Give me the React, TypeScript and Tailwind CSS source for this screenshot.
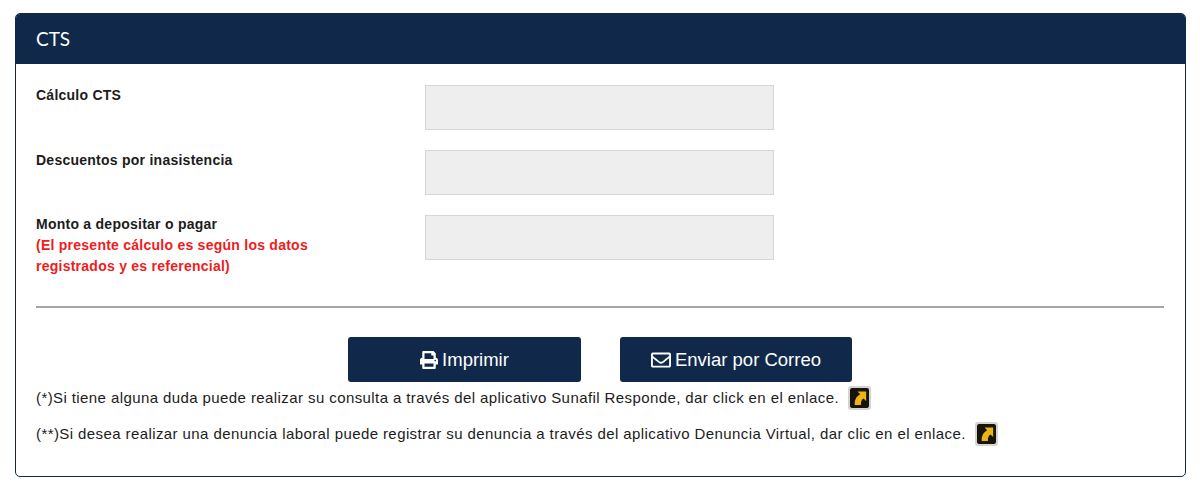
import { FaPrint, FaRegEnvelope } from "react-icons/fa";

function LinkIcon() {
  return (
    <span className="inline-block h-[24px] w-[23px] rounded-[3px] border-2 border-[#d4d4d4] bg-white">
      <svg viewBox="0 0 20 20" preserveAspectRatio="none" className="h-full w-full">
        <rect width="20" height="20" rx="2" fill="#17140c" />
        <path d="M8 3.5h9v9.5l-2.8-2.6C12 11.5 11.5 13.5 11.5 17H5C4.6 12 6.5 8.5 10.7 6.2z" fill="#eeb416" />
      </svg>
    </span>
  );
}

function Row({ children, last }: { children: React.ReactNode; last?: boolean }) {
  return (
    <div className={last ? "flex items-start" : "flex items-start mb-[20px]"}>
      <div className={last ? "-mt-[1px] w-[389px] text-[14px] font-bold leading-[21px] tracking-[0.25px] text-[#1c1c1c]" : "w-[389px] text-[14px] font-bold leading-[21px] tracking-[0.25px] text-[#1c1c1c]"}>{children}</div>
      <div className="h-[45px] w-[349px] border border-[#d6d6d6] bg-[#eeeeee]" />
    </div>
  );
}

export default function App() {
  return (
    <div className="h-[501px] bg-white pt-[13px] pl-[15px] font-['Liberation_Sans',Arial,sans-serif]">
      <div className="h-[464px] w-[1171px] overflow-hidden rounded-[5px] border border-[#10294b]">
        <div className="flex h-[50px] items-center bg-[#10294b] px-[20px] font-['Lato',sans-serif] text-[19px] text-white">
          CTS
        </div>
        <div className="px-[20px] pt-[21px]">
          <Row>Cálculo CTS</Row>
          <Row>Descuentos por inasistencia</Row>
          <Row last>
            Monto a depositar o pagar
            <br />
            <span className="text-[#f01c1c]">
              (El presente cálculo es según los datos
              <br />
              registrados y es referencial)
            </span>
          </Row>
          <div className="mt-[29px] mr-[1px] h-[2px] bg-[#a6a6a6]" />
          <div className="mt-[29px] flex justify-center gap-[39px] pr-[1px]">
            <button className="flex h-[45px] w-[233px] items-center justify-center gap-[4px] rounded-[3px] bg-[#10294b] text-[18.5px] text-white">
              <FaPrint className="h-[18px] w-[18px]" /> Imprimir
            </button>
            <button className="flex h-[45px] w-[232px] items-center justify-center gap-[4px] rounded-[3px] bg-[#10294b] text-[18.5px] text-white">
              <FaRegEnvelope className="h-[20px] w-[20px]" /> Enviar por Correo
            </button>
          </div>
          <div className="mt-[4px] flex h-[24px] items-center gap-[9px] text-[15px] tracking-[0.41px] text-[#1c1c1c]">
            <span>(*)Si tiene alguna duda puede realizar su consulta a través del aplicativo Sunafil Responde, dar click en el enlace.</span>
            <LinkIcon />
          </div>
          <div className="mt-[12px] flex h-[24px] items-center gap-[9px] text-[15px] tracking-[0.41px] text-[#1c1c1c]">
            <span>(**)Si desea realizar una denuncia laboral puede registrar su denuncia a través del aplicativo Denuncia Virtual, dar clic en el enlace.</span>
            <LinkIcon />
          </div>
        </div>
      </div>
    </div>
  );
}
